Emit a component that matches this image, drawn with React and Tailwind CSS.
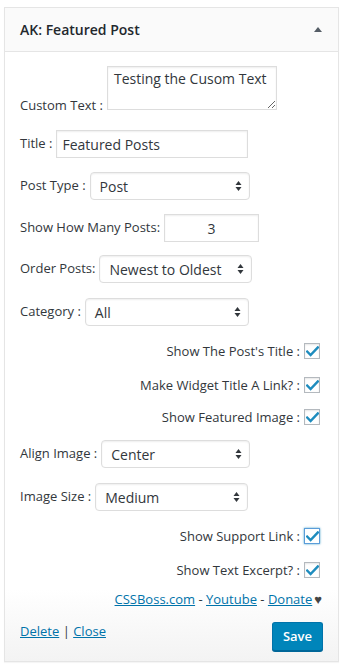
import React from "react";

const font = { fontFamily: '"Open Sans", "Noto Sans", sans-serif' };

function Arrows() {
  return (
    <svg className="pointer-events-none absolute right-[7px] top-1/2 -translate-y-1/2" width="7" height="11" viewBox="0 0 7 11">
      <path d="M0.5 4.5 L3.5 0.5 L6.5 4.5 Z" fill="#32373c" />
      <path d="M0.5 6.5 L3.5 10.5 L6.5 6.5 Z" fill="#32373c" />
    </svg>
  );
}

function Select({ value, w }) {
  return (
    <div className={`relative ml-[4px] h-[28px] ${w} rounded-[4px] border border-[#dddddd] bg-white shadow-[inset_0_1px_2px_rgba(0,0,0,0.07)] flex items-center pl-[9px] text-[14px] text-[#32373c]`}>
      <span>{value}</span>
      <Arrows />
    </div>
  );
}

function Check({ focused }) {
  return (
    <div
      className={`w-[16px] h-[16px] shrink-0 border flex items-center justify-center bg-white ${
        focused ? "border-[#5b9dd9] shadow-[0_0_2px_rgba(30,140,190,0.8)]" : "border-[#b4b9be] shadow-[inset_0_1px_2px_rgba(0,0,0,0.1)]"
      }`}
    >
      <svg width="13" height="11" viewBox="0 0 13 11">
        <path d="M1.2 5.6 L4.6 9 L11.8 1.4" stroke="#1e8cbe" strokeWidth="2.4" fill="none" strokeLinecap="square" />
      </svg>
    </div>
  );
}

function CheckRow({ label, mt, focused }) {
  return (
    <div className={`flex h-[16px] items-center justify-end pr-[3px] ${mt}`}>
      <span className="mr-[4px] leading-[16px]">{label}</span>
      <Check focused={focused} />
    </div>
  );
}

export default function App() {
  return (
    <div className="min-h-[671px] bg-white pt-[7px] pl-[4px]" style={font}>
      <div className="w-[335px] border border-[#e5e5e5] shadow-[0_1px_1px_rgba(0,0,0,0.04)] text-[13px] text-[#32373c]">
        <div className="h-[44px] bg-[#fafafa] border-b border-[#e5e5e5] flex items-center justify-between pl-[15px] pr-[16px]">
          <span className="text-[14px] font-semibold text-[#23282d]">AK: Featured Post</span>
          <svg width="8" height="5" viewBox="0 0 8 5">
            <path d="M0 5 L4 0 L8 5 Z" fill="#555d66" />
          </svg>
        </div>
        <div className="pl-[15px] pr-[15px] pb-[10px] bg-linear-to-b from-white from-[88%] to-[#f3f3f3]">
          <div className="flex items-end mt-[14px]">
            <span className="mb-[-4px] leading-[18px]">Custom Text :</span>
            <textarea
              defaultValue="Testing the Cusom Text"
              className="ml-[4px] w-[170px] h-[44px] border border-[#dddddd] px-[6px] py-[2px] text-[14px] leading-[20px] text-[#32373c] shadow-[inset_0_1px_2px_rgba(0,0,0,0.07)] outline-none"
              style={font}
            />
          </div>

          <div className="flex items-center mt-[20px]">
            <span>Title :</span>
            <div className="ml-[4px] w-[192px] h-[28px] border border-[#dddddd] flex items-center pl-[5px] text-[14px] shadow-[inset_0_1px_2px_rgba(0,0,0,0.07)]">
              Featured Posts
            </div>
          </div>

          <div className="flex items-center mt-[14px]">
            <span>Post Type :</span>
            <Select value="Post" w="w-[160px]" />
          </div>

          <div className="flex items-center mt-[14px]">
            <span>Show How Many Posts:</span>
            <div className="ml-[4px] w-[95px] h-[28px] border border-[#dddddd] flex items-center justify-center text-[14px] shadow-[inset_0_1px_2px_rgba(0,0,0,0.07)]">
              3
            </div>
          </div>

          <div className="flex items-center mt-[13px]">
            <span>Order Posts:</span>
            <Select value="Newest to Oldest" w="w-[153px]" />
          </div>

          <div className="flex items-center mt-[15px]">
            <span>Category :</span>
            <Select value="All" w="w-[164px]" />
          </div>

          <CheckRow label="Show The Post's Title :" mt="mt-[17px]" />
          <CheckRow label="Make Widget Title A Link? :" mt="mt-[18px]" />
          <CheckRow label="Show Featured Image :" mt="mt-[16px]" />

          <div className="flex items-center mt-[15px]">
            <span>Align Image :</span>
            <Select value="Center" w="w-[149px]" />
          </div>

          <div className="flex items-center mt-[15px]">
            <span>Image Size :</span>
            <Select value="Medium" w="w-[153px]" />
          </div>

          <CheckRow label="Show Support Link :" mt="mt-[17px]" focused />
          <CheckRow label="Show Text Excerpt? :" mt="mt-[18px]" />

          <div className="flex justify-end mt-[12px] leading-[18px] pr-[1px]">
            <a className="text-[#0073aa] underline">CSSBoss.com</a>
            <span>&nbsp;-&nbsp;</span>
            <a className="text-[#0073aa] underline">Youtube</a>
            <span>&nbsp;-&nbsp;</span>
            <a className="text-[#0073aa] underline">Donate</a>
            <span className="ml-[2px] text-[#444]">♥</span>
          </div>

          <div className="flex justify-between items-start mt-[14px]">
            <div className="leading-[18px]">
              <a className="text-[#0073aa] underline">Delete</a>
              <span> | </span>
              <a className="text-[#0073aa] underline">Close</a>
            </div>
            <button className="h-[29px] px-[10px] rounded-[3px] bg-[#0085ba] border border-[#0073aa] border-b-[#006799] shadow-[0_1px_0_#006799] text-white text-[13px] font-semibold">
              Save
            </button>
          </div>
        </div>
      </div>
    </div>
  );
}
